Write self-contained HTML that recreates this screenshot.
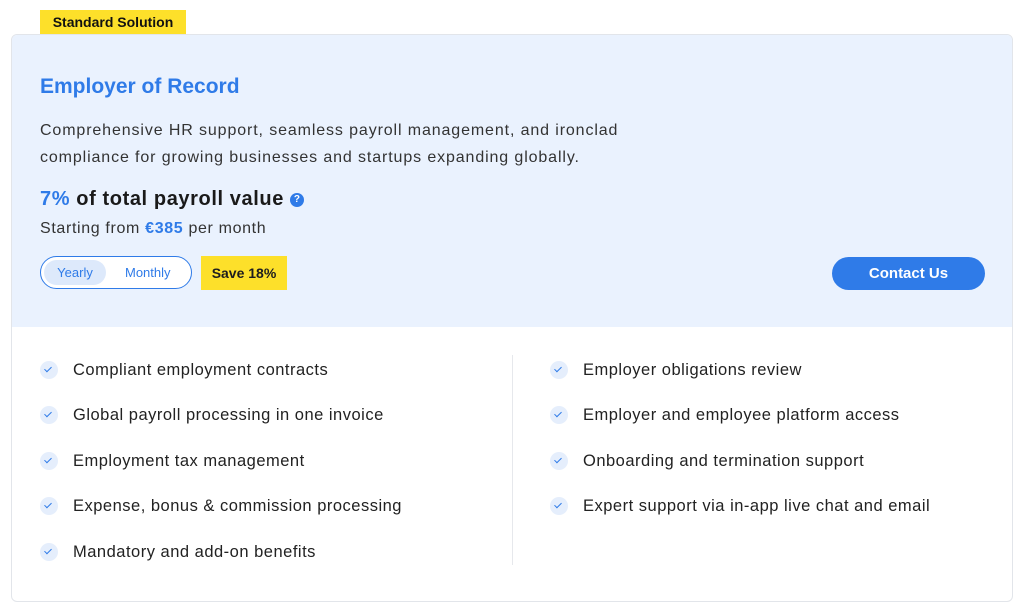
<!DOCTYPE html>
<html><head><style>
body{margin:0;width:1024px;height:612px;background:#fff;font-family:"Liberation Sans",sans-serif;color:#1d1d1f;position:relative;overflow:hidden}
.badge{position:absolute;left:40px;top:10px;width:146px;height:24px;background:#fde02a;font-size:14px;font-weight:bold;line-height:24px;text-align:center;color:#111}
.card{position:absolute;left:11px;top:34px;width:1000px;height:566px;border:1px solid #e2e5ea;border-radius:6px;overflow:hidden}
.head{position:absolute;left:0;top:0;width:1000px;height:292px;background:#eaf2fe}
.a{position:absolute;white-space:nowrap}
.t{left:28px;top:40px;font-size:21px;font-weight:bold;color:#2f7be8}
.d{left:28px;top:82px;font-size:16px;line-height:27px;color:#333;letter-spacing:0.88px}
.p{left:28px;top:153px;font-size:20px;font-weight:bold;color:#1a1a1a;letter-spacing:0.6px}
.p b,.s b{color:#2f7be8}
.q{display:inline-block;width:14px;height:14px;border-radius:50%;background:#2f7be8;color:#fff;font-size:10px;line-height:14px;text-align:center;vertical-align:3px;margin-left:6px;letter-spacing:0}
.s{left:28px;top:185px;font-size:16px;color:#333;letter-spacing:0.65px}
.tog{position:absolute;left:28px;top:221px;width:150px;height:31px;border:1.5px solid #2f7be8;border-radius:17px;background:#fff}
.y{position:absolute;left:3px;top:3px;width:62px;height:25px;border-radius:13px;background:#dde9fb;color:#2f7be8;font-size:13px;line-height:25px;text-align:center}
.m{position:absolute;left:84px;top:3px;font-size:13px;line-height:25px;color:#2f7be8}
.save{position:absolute;left:189px;top:221px;width:86px;height:34px;background:#fde02a;font-size:14px;font-weight:bold;line-height:34px;text-align:center}
.btn{position:absolute;left:820px;top:222px;width:153px;height:33px;border-radius:17px;background:#2f7be8;color:#fff;font-weight:bold;font-size:15px;line-height:33px;text-align:center}
.div{position:absolute;left:500px;top:320px;width:1px;height:210px;background:#e6e8ec}
.f{position:absolute;font-size:16.5px;color:#222;white-space:nowrap;letter-spacing:0.5px}
.f i{position:absolute;left:-33px;top:0px;width:18px;height:18px;border-radius:50%;background:#e5eefc}
.f i:after{content:"";position:absolute;left:6px;top:4px;width:3px;height:6px;border:solid #2f7be8;border-width:0 1.6px 1.6px 0;transform:rotate(45deg)}
</style></head><body>
<div class="badge">Standard Solution</div>
<div class="card">
<div class="head">
<div class="a t">Employer of Record</div>
<div class="a d">Comprehensive HR support, seamless payroll management, and ironclad<br>compliance for growing businesses and startups expanding globally.</div>
<div class="a p"><b>7%</b> of total payroll value<span class="q">?</span></div>
<div class="a s">Starting from <b>€385</b> per month</div>
<div class="tog"><div class="y">Yearly</div><div class="m">Monthly</div></div>
<div class="save">Save 18%</div>
<div class="btn">Contact Us</div>
</div>
<div class="div"></div>
<div class="f" style="left:61px;top:326px"><i></i>Compliant employment contracts</div>
<div class="f" style="left:61px;top:371px"><i></i>Global payroll processing in one invoice</div>
<div class="f" style="left:61px;top:417px"><i></i>Employment tax management</div>
<div class="f" style="left:61px;top:462px"><i></i>Expense, bonus &amp; commission processing</div>
<div class="f" style="left:61px;top:508px"><i></i>Mandatory and add-on benefits</div>
<div class="f" style="left:571px;top:326px"><i></i>Employer obligations review</div>
<div class="f" style="left:571px;top:371px"><i></i>Employer and employee platform access</div>
<div class="f" style="left:571px;top:417px"><i></i>Onboarding and termination support</div>
<div class="f" style="left:571px;top:462px"><i></i>Expert support via in-app live chat and email</div>
</div>
</body></html>
